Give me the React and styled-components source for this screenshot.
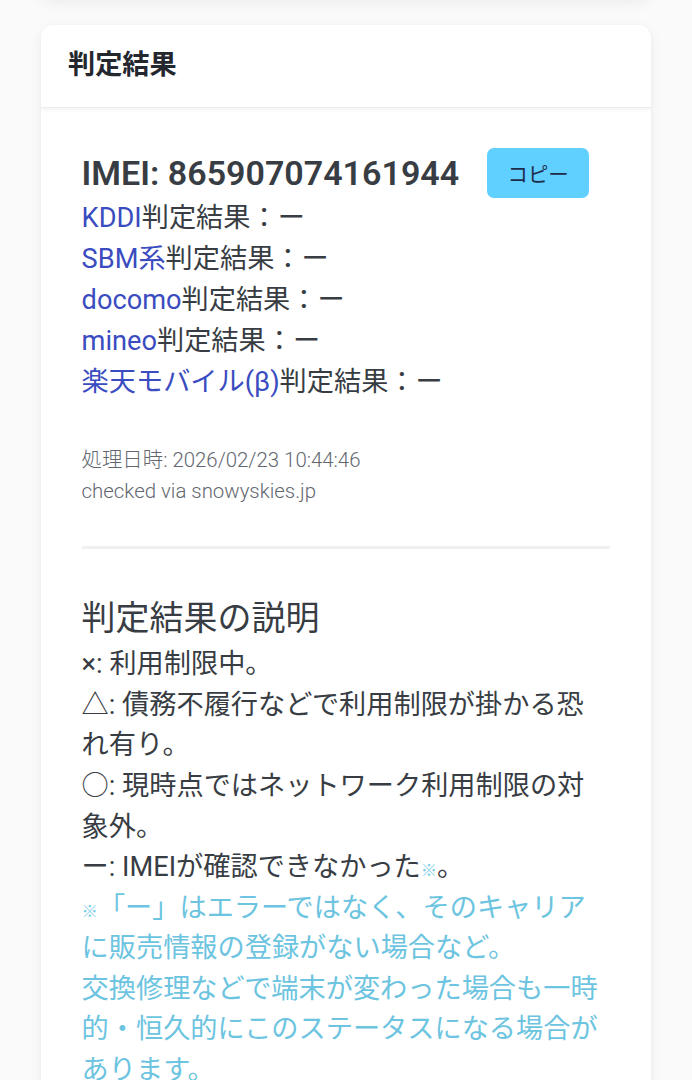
import styled, { createGlobalStyle } from "styled-components";

const GlobalStyle = createGlobalStyle`
  html, body {
    margin: 0;
    padding: 0;
    background: #fafafa;
  }
  body {
    font-family: Roboto, "Noto Sans CJK JP", sans-serif;
    color: #383d44;
    overflow: hidden;
  }
`;

const carriers = ["KDDI", "SBM系", "docomo", "mineo", "楽天モバイル(β)"];

const App = () => {
  return (
    <>
      <GlobalStyle />
      <Page>
        <PrevCard />
        <Card>
          <CardHeader>判定結果</CardHeader>
          <CardBody>
            <ImeiRow>
              <Imei>IMEI: 865907074161944</Imei>
              <CopyButton>コピー</CopyButton>
            </ImeiRow>
            <Results>
              {carriers.map((name) => (
                <Line key={name}>
                  <Carrier>{name}</Carrier>判定結果：ー
                </Line>
              ))}
            </Results>
            <Meta>
              <div>処理日時: 2026/02/23 10:44:46</div>
              <div>checked via snowyskies.jp</div>
            </Meta>
            <Divider />
            <Heading>判定結果の説明</Heading>
            <Legend>
              <Line>×: 利用制限中。</Line>
              <Line>△: 債務不履行などで利用制限が掛かる恐れ有り。</Line>
              <Line>○: 現時点ではネットワーク利用制限の対象外。</Line>
              <Line>
                ー: IMEIが確認できなかった<Mark>※</Mark>。
              </Line>
              <Note>
                <Mark>※</Mark>「ー」はエラーではなく、そのキャリアに販売情報の登録がない場合など。
              </Note>
              <Note>
                交換修理などで端末が変わった場合も一時的・恒久的にこのステータスになる場合があります。
              </Note>
            </Legend>
          </CardBody>
        </Card>
      </Page>
    </>
  );
};

const Page = styled.div`
  padding: 0 40.8px 40px;
  background: #fafafa;
  min-height: 1080px;
  box-sizing: border-box;
`;

const PrevCard = styled.div`
  height: 60px;
  margin-top: -63px;
  margin-bottom: 28px;
  background: #fff;
  border-radius: 13px;
  box-shadow: 0 4px 16px rgba(0, 0, 0, 0.07), 0 1px 3px rgba(0, 0, 0, 0.04);
`;

const Card = styled.div`
  background: #fff;
  border-radius: 13px;
  box-shadow: 0 4px 14px rgba(0, 0, 0, 0.06), 0 1px 3px rgba(0, 0, 0, 0.04);
  overflow: hidden;
`;

const CardHeader = styled.div`
  padding: 20.4px 27.2px;
  font-size: 27.2px;
  line-height: 1.5;
  font-weight: 700;
  color: #24282e;
  border-bottom: 1px solid #ececec;
  box-shadow: 0 2px 4px rgba(0, 0, 0, 0.05);
`;

const CardBody = styled.div`
  padding: 40.8px;
`;

const ImeiRow = styled.div`
  display: flex;
  align-items: center;
  gap: 28px;
  height: 50px;
`;

const Imei = styled.div`
  font-size: 34px;
  font-weight: 600;
  line-height: 1.2;
  color: #383d44;
`;

const CopyButton = styled.button`
  width: 102px;
  height: 50px;
  border: none;
  border-radius: 7px;
  background: #5fd0ff;
  color: #1f2b4a;
  font-family: Roboto, "Noto Sans CJK JP", sans-serif;
  font-size: 20.4px;
  padding: 0;
`;

const Results = styled.div`
  font-size: 27.2px;
  line-height: 40.8px;
`;

const Line = styled.div``;

const Carrier = styled.span`
  color: #3a4cc0;
`;

const Meta = styled.div`
  margin-top: 42.8px;
  font-size: 20.4px;
  line-height: 30.6px;
  font-weight: 300;
  color: #62676f;
`;

const Divider = styled.hr`
  margin: 40px 0 49px;
  border: none;
  border-top: 3px solid #f0f0f0;
`;

const Heading = styled.h3`
  margin: 0 0 5px;
  font-size: 34px;
  font-weight: 400;
  line-height: 40.8px;
  color: #383d44;
`;

const Legend = styled.div`
  font-size: 27.2px;
  line-height: 40.6px;
`;

const Note = styled.div`
  color: #6cc4e0;
`;

const Mark = styled.span`
  color: #7ccfe8;
  font-size: 0.6em;
  line-height: 0;
`;

export default App;
